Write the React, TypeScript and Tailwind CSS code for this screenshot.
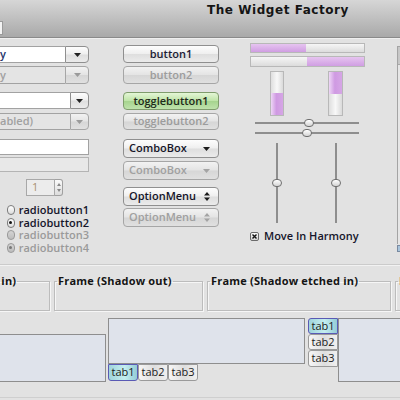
import React from "react";

const btnBg =
  "bg-[linear-gradient(#fdfdfd,#efefef_48%,#dedede_52%,#ebebeb)] border border-[#8f8f8f]";
const btnDis =
  "bg-[linear-gradient(#f2f2f2,#e4e4e4_48%,#d6d6d6_52%,#e0e0e0)] border border-[#a6a6a6]";

function Down({ c = "#222" }: { c?: string }) {
  return (
    <svg width="7" height="4" viewBox="0 0 7 4">
      <path d="M0 0h7L3.5 4z" fill={c} />
    </svg>
  );
}

function UpDown({ c = "#222" }: { c?: string }) {
  return (
    <svg width="6" height="9" viewBox="0 0 6 9">
      <path d="M3 0L6 3.5H0z M0 5.5h6L3 9z" fill={c} />
    </svg>
  );
}

function Btn({
  children,
  disabled,
  h,
  mt,
}: {
  children: React.ReactNode;
  disabled?: boolean;
  h: string;
  mt: string;
}) {
  return (
    <div
      className={`${mt} ${h} flex items-center justify-center rounded-[4px] text-[11px] font-semibold ${
        disabled ? `${btnDis} text-[#9c9c9c]` : `${btnBg} text-[#1c1c34]`
      }`}
    >
      {children}
    </div>
  );
}

function MenuBtn({
  label,
  disabled,
  mt,
  icon,
}: {
  label: string;
  disabled?: boolean;
  mt: string;
  icon: "down" | "updown";
}) {
  const c = disabled ? "#a4a4a4" : "#1c1c1c";
  return (
    <div
      className={`${mt} flex h-[19px] items-center justify-between rounded-[4px] pl-[5px] pr-[8px] text-[11px] font-semibold ${
        disabled ? `${btnDis} text-[#a0a0a0]` : `${btnBg} text-[#141428]`
      }`}
    >
      <span>{label}</span>
      {icon === "down" ? <Down c={c} /> : <UpDown c={c} />}
    </div>
  );
}

function ComboEntry({
  mt,
  h,
  btnW,
  disabled,
  text,
}: {
  mt: string;
  h: string;
  btnW: string;
  disabled?: boolean;
  text?: string;
}) {
  return (
    <div className={`${mt} ${h} flex`}>
      <div
        className={`flex flex-1 items-center overflow-hidden whitespace-nowrap border-y border-[#a2a2a2] text-[11px] font-semibold ${
          disabled ? "bg-[#e4e4e4] text-[#a0a0a0]" : "bg-white text-[#23346a]"
        }`}
      >
        {text}
      </div>
      <div
        className={`${btnW} flex items-center justify-center rounded-r-[4px] ${
          disabled ? btnDis : btnBg
        }`}
      >
        <Down c={disabled ? "#9a9a9a" : "#222"} />
      </div>
    </div>
  );
}

function Radio({
  label,
  checked,
  disabled,
}: {
  label: string;
  checked?: boolean;
  disabled?: boolean;
}) {
  return (
    <div className="flex h-[12.5px] items-center">
      <div
        className={`ml-[7px] flex h-[10px] w-[10px] items-center justify-center rounded-full border ${
          disabled
            ? "border-[#9a9a9a] bg-[linear-gradient(#d4d4d4,#bcbcbc)]"
            : "border-[#7c7c7c] bg-[linear-gradient(#ffffff,#dcdcdc)]"
        }`}
      >
        {checked && (
          <div
            className={`h-[3px] w-[3px] rounded-full ${
              disabled ? "bg-[#777]" : "bg-[#111]"
            }`}
          />
        )}
      </div>
      <span
        className={`ml-[4px] text-[11px] font-semibold leading-[12px] ${
          disabled ? "text-[#9a9a9a]" : "text-[#15152a]"
        }`}
      >
        {label}
      </span>
    </div>
  );
}

function Knob() {
  return (
    <div className="h-[8px] w-[10px] rounded-full border border-[#6f6f6f] bg-[linear-gradient(#ffffff,#d4d4d4)]" />
  );
}

function Tab({
  label,
  active,
  side,
  w,
  h,
}: {
  label: string;
  active?: boolean;
  side: "bottom" | "left";
  w: string;
  h: string;
}) {
  const round = side === "bottom" ? "rounded-b-[3px]" : "rounded-l-[3px]";
  return (
    <div
      className={`${w} ${h} ${round} flex items-center justify-center border text-[11px] text-[#1a1a1a] ${
        active
          ? "border-[#5a5ab4] bg-[linear-gradient(90deg,#9fd4dc,#c4eef0_55%,#94ccd6)]"
          : "border-[#9a9a9a] bg-[linear-gradient(90deg,#f6f6f6,#dedede_55%,#f0f0f0)]"
      }`}
    >
      {label}
    </div>
  );
}

function Frame({ label, cls }: { label: string; cls: string }) {
  return (
    <fieldset
      className={`${cls} h-[37px] shrink-0 border border-[#bcbcbc] px-[2px] shadow-[inset_1px_1px_0_#f6f6f6,1px_1px_0_#f6f6f6]`}
    >
      <legend className="whitespace-nowrap px-[1px] text-[11px] font-bold leading-[14px] tracking-[0.2px] text-[#141414]">
        {label}
      </legend>
    </fieldset>
  );
}

export default function App() {
  return (
    <div className="h-[400px] w-[400px] overflow-hidden bg-[#e2e2e2] [font-family:'Open_Sans','DejaVu_Sans',sans-serif]">
      {/* title bar */}
      <div className="flex h-[38px] items-start border-b border-[#8a8a8a] bg-[linear-gradient(#d6d6d6,#a9a9a9)]">
        <div className="mt-[21px] h-[14px] w-[3px] border-y border-r border-[#9a9a9a] bg-[#f3f3f3]" />
        <div className="ml-[204px] mt-[2px] text-[12px] font-bold leading-[16px] tracking-[0.55px] text-[#151515] [font-family:'DejaVu_Sans',sans-serif]">
          The Widget Factory
        </div>
      </div>

      {/* main widgets */}
      <div className="flex h-[226px] border-t border-[#efefef]">
        {/* left column */}
        <div className="flex w-[89px] shrink-0 flex-col">
          <ComboEntry mt="mt-[7px]" h="h-[17px]" btnW="w-[24px]" text="y" />
          <ComboEntry mt="mt-[3px]" h="h-[18px]" btnW="w-[24px]" text="y" disabled />
          <ComboEntry mt="mt-[8px]" h="h-[17px]" btnW="w-[19px]" />
          <ComboEntry mt="mt-[4px]" h="h-[17px]" btnW="w-[19px]" text="abled)" disabled />
          <div className="mt-[9px] h-[16px] border-y border-r border-[#a2a2a2] bg-white" />
          <div className="mt-[2px] h-[15px] border-y border-r border-[#b4b4b4] bg-[#e8e8e8]" />
          <div className="mt-[7px] flex h-[17px] justify-center">
            <div className="flex w-[29px] items-center border border-[#a8a8a8] bg-[#ececec] pl-[5px] text-[11px] text-[#a89070]">
              1
            </div>
            <div className="flex w-[8px] flex-col items-center justify-center gap-[3px] rounded-r-[3px] border-y border-r border-[#a0a0a0] bg-[linear-gradient(#fafafa,#dcdcdc)]">
              <svg width="4" height="3" viewBox="0 0 4 3">
                <path d="M2 0L4 3H0z" fill="#888" />
              </svg>
              <svg width="4" height="3" viewBox="0 0 4 3">
                <path d="M0 0h4L2 3z" fill="#888" />
              </svg>
            </div>
          </div>
          <div className="mt-[8px] flex flex-col">
            <Radio label="radiobutton1" />
            <Radio label="radiobutton2" checked />
            <Radio label="radiobutton3" disabled />
            <Radio label="radiobutton4" checked disabled />
          </div>
        </div>

        {/* button column */}
        <div className="ml-[34px] flex w-[96px] shrink-0 flex-col">
          <Btn mt="mt-[6px]" h="h-[18px]">button1</Btn>
          <Btn mt="mt-[3px]" h="h-[18px]" disabled>button2</Btn>
          <div className="mt-[8px] flex h-[18px] items-center justify-center rounded-[4px] border border-[#7f9c6c] bg-[linear-gradient(#e4f6d6,#bfe4a8_48%,#a6d48e_52%,#bfe2ac)] text-[11px] font-semibold text-[#1e2a1a]">
            togglebutton1
          </div>
          <Btn mt="mt-[3px]" h="h-[17px]" disabled>togglebutton2</Btn>
          <MenuBtn mt="mt-[9px]" label="ComboBox" icon="down" />
          <MenuBtn mt="mt-[3px]" label="ComboBox" icon="down" disabled />
          <MenuBtn mt="mt-[7px]" label="OptionMenu" icon="updown" />
          <MenuBtn mt="mt-[2px]" label="OptionMenu" icon="updown" disabled />
        </div>

        {/* range column */}
        <div className="ml-[31px] flex w-[115px] shrink-0 flex-col">
          <div className="mt-[4px] flex h-[10px] border border-[#b8b8b8] bg-[linear-gradient(#f6f6f6,#dcdcdc)]">
            <div className="w-[55px] bg-[linear-gradient(#e6c4f0,#d09ee2)]" />
          </div>
          <div className="mt-[3px] flex h-[11px] justify-end border border-[#b8b8b8] bg-[linear-gradient(#f6f6f6,#dcdcdc)]">
            <div className="w-[57px] bg-[linear-gradient(#e6c4f0,#d09ee2)]" />
          </div>
          <div className="mt-[4px] flex h-[45px]">
            <div className="ml-[20px] flex w-[14px] flex-col justify-end border border-[#b8b8b8] bg-[linear-gradient(90deg,#dedede,#f8f8f8_50%,#dadada)]">
              <div className="h-[22px] bg-[linear-gradient(90deg,#eed6f6,#cf9ae2_45%,#d6a6e6)]" />
            </div>
            <div className="ml-[44px] flex w-[15px] flex-col border border-[#b8b8b8] bg-[linear-gradient(90deg,#dedede,#f8f8f8_50%,#dadada)]">
              <div className="h-[22px] bg-[linear-gradient(90deg,#eed6f6,#cf9ae2_45%,#d6a6e6)]" />
            </div>
          </div>
          <div className="relative ml-[5px] mt-[2px] flex h-[10px] w-[104px] items-center">
            <div className="h-[2px] w-full bg-[#8e8e8e]" />
            <div className="absolute left-[49px] top-[1px]">
              <Knob />
            </div>
          </div>
          <div className="relative ml-[5px] flex h-[10px] w-[104px] items-center">
            <div className="h-[2px] w-full bg-[#8e8e8e]" />
            <div className="absolute left-[47px] top-[1px]">
              <Knob />
            </div>
          </div>
          <div className="mt-[5px] flex h-[80px]">
            <div className="relative ml-[26px] flex w-[2px] justify-center bg-[#8e8e8e]">
              <div className="absolute top-[36px]">
                <Knob />
              </div>
            </div>
            <div className="relative ml-[57px] flex w-[2px] justify-center bg-[#8e8e8e]">
              <div className="absolute top-[36px]">
                <Knob />
              </div>
            </div>
          </div>
          <div className="mt-[6px] flex h-[14px] items-center">
            <div className="flex h-[9px] w-[9px] items-center justify-center rounded-[2px] border border-[#6a6a6a] bg-[linear-gradient(#fafafa,#d4d4d4)]">
              <svg width="5" height="5" viewBox="0 0 5 5">
                <path d="M0.5 0.5L4.5 4.5M4.5 0.5L0.5 4.5" stroke="#111" strokeWidth="1.4" />
              </svg>
            </div>
            <span className="ml-[5px] text-[11px] font-semibold text-[#15152a]">
              Move In Harmony
            </span>
          </div>
        </div>

        {/* right edge panel */}
        <div className="ml-[32px] flex flex-col">
          <div className="mt-[7px] flex h-[198px] w-[10px] flex-col border-l border-t border-[#a4a4a4] bg-[#e6e6e6]">
            <div className="h-[18px] border-b border-[#a8a8a8] bg-[linear-gradient(90deg,#c4c4c4,#dedede)]" />
          </div>
          <div className="mt-[1px] h-[7px] w-[4px] border border-[#7a8aa0] bg-[#a8c4dc]" />
        </div>
      </div>

      {/* separator */}
      <div className="h-[2px] border-t border-[#cbcbcb] bg-[#f2f2f2]" />

      {/* frames */}
      <div className="mt-[8px] flex gap-[4px]">
        <Frame label="Frame (Shadow in)" cls="-ml-[93px] w-[143px]" />
        <Frame label="Frame (Shadow out)" cls="w-[149px]" />
        <Frame label="Frame (Shadow etched in)" cls="w-[184px]" />
        <Frame label="Frame (Shadow etched out)" cls="w-[120px]" />
      </div>

      {/* notebooks */}
      <div className="mt-[7px] flex items-start">
        <div className="mt-[16px] h-[48px] w-[106px] shrink-0 border-y border-r border-[#8e8e8e] bg-[#dfe3eb]" />
        <div className="ml-[2px] flex w-[197px] shrink-0 flex-col">
          <div className="h-[46px] border border-[#8e8e8e] bg-[#dfe3eb]" />
          <div className="flex">
            <Tab label="tab1" active side="bottom" w="w-[30px]" h="h-[17px]" />
            <Tab label="tab2" side="bottom" w="w-[30px]" h="h-[17px]" />
            <Tab label="tab3" side="bottom" w="w-[30px]" h="h-[17px]" />
          </div>
        </div>
        <div className="ml-[3px] flex shrink-0">
          <div className="flex flex-col">
            <Tab label="tab1" active side="left" w="w-[30px]" h="h-[16px]" />
            <Tab label="tab2" side="left" w="w-[30px]" h="h-[16px]" />
            <Tab label="tab3" side="left" w="w-[30px]" h="h-[17px]" />
          </div>
          <div className="h-[64px] w-[70px] border border-[#8e8e8e] bg-[#dfe3eb]" />
        </div>
      </div>
      <div className="mt-[15px] h-[1px] bg-[#cfcfcf]" />
    </div>
  );
}
